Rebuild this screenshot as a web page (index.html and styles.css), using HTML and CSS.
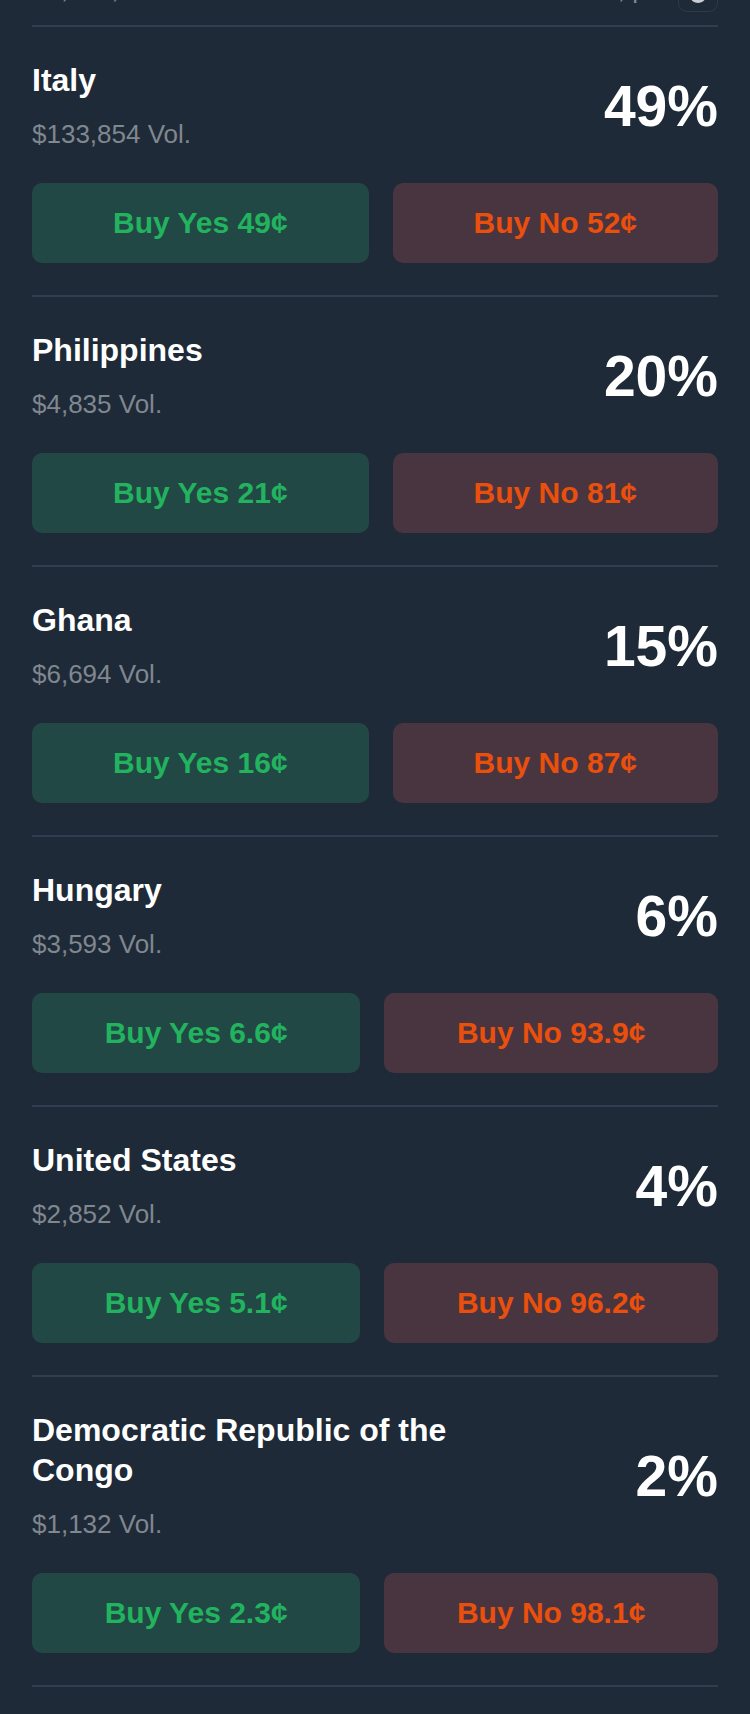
FILE: index.html
```html
<!DOCTYPE html>
<html lang="en">
<head>
  <meta charset="UTF-8">
  <title>Markets</title>
  <link rel="stylesheet" href="styles.css">
</head>
<body>
<div class="list">
  <!-- bottom of the previous row, scrolled mostly out of view -->
  <div class="prev">
    <span class="prev_vol">$2,413,905 Vol.</span>
    <span class="prev_side">
      <span class="prev_note">Rules, p.</span>
      <span class="prev_icon"><span class="prev_dot"></span></span>
    </span>
  </div>

  <div class="market">
    <div class="market_head">
      <div class="market_info">
        <p class="market_title">Italy</p>
        <p class="market_vol">$133,854 Vol.</p>
      </div>
      <div class="market_pct">49%</div>
    </div>
    <div class="market_btns">
      <a class="btn btn_yes" href="#">Buy Yes 49¢</a>
      <a class="btn btn_no" href="#">Buy No 52¢</a>
    </div>
  </div>

  <div class="market">
    <div class="market_head">
      <div class="market_info">
        <p class="market_title">Philippines</p>
        <p class="market_vol">$4,835 Vol.</p>
      </div>
      <div class="market_pct">20%</div>
    </div>
    <div class="market_btns">
      <a class="btn btn_yes" href="#">Buy Yes 21¢</a>
      <a class="btn btn_no" href="#">Buy No 81¢</a>
    </div>
  </div>

  <div class="market">
    <div class="market_head">
      <div class="market_info">
        <p class="market_title">Ghana</p>
        <p class="market_vol">$6,694 Vol.</p>
      </div>
      <div class="market_pct">15%</div>
    </div>
    <div class="market_btns">
      <a class="btn btn_yes" href="#">Buy Yes 16¢</a>
      <a class="btn btn_no" href="#">Buy No 87¢</a>
    </div>
  </div>

  <div class="market">
    <div class="market_head">
      <div class="market_info">
        <p class="market_title">Hungary</p>
        <p class="market_vol">$3,593 Vol.</p>
      </div>
      <div class="market_pct">6%</div>
    </div>
    <div class="market_btns">
      <a class="btn btn_yes" href="#">Buy Yes 6.6¢</a>
      <a class="btn btn_no" href="#">Buy No 93.9¢</a>
    </div>
  </div>

  <div class="market">
    <div class="market_head">
      <div class="market_info">
        <p class="market_title">United States</p>
        <p class="market_vol">$2,852 Vol.</p>
      </div>
      <div class="market_pct">4%</div>
    </div>
    <div class="market_btns">
      <a class="btn btn_yes" href="#">Buy Yes 5.1¢</a>
      <a class="btn btn_no" href="#">Buy No 96.2¢</a>
    </div>
  </div>

  <div class="market">
    <div class="market_head">
      <div class="market_info">
        <p class="market_title">Democratic Republic of the Congo</p>
        <p class="market_vol">$1,132 Vol.</p>
      </div>
      <div class="market_pct">2%</div>
    </div>
    <div class="market_btns">
      <a class="btn btn_yes" href="#">Buy Yes 2.3¢</a>
      <a class="btn btn_no" href="#">Buy No 98.1¢</a>
    </div>
  </div>

  <div class="list_end"></div>
</div>
</body>
</html>
```

FILE: styles.css
```css
*{
  margin: 0;
  padding: 0;
  box-sizing: border-box;
}
body{
  background: #1e2a38;
  font-family: "Liberation Sans", Arial, sans-serif;
  color: #ffffff;
}
.list{
  padding: 0 32px;
}
/* leftover of the row above */
.prev{
  height: 25px;
  overflow: hidden;
  display: flex;
  justify-content: space-between;
  align-items: flex-start;
}
.prev_vol{
  margin-top: -26px;
  font-size: 26px;
  line-height: 30px;
  color: #80878f;
}
.prev_side{
  display: flex;
  align-items: flex-start;
  gap: 24px;
}
.prev_note{
  margin-top: -26px;
  font-size: 26px;
  line-height: 30px;
  color: #80878f;
}
.prev_icon{
  display: block;
  width: 40px;
  height: 40px;
  margin-top: -28px;
  border: 1px solid #2e3a48;
  border-radius: 9px;
  position: relative;
}
.prev_dot{
  position: absolute;
  left: 12px;
  top: 20px;
  width: 14px;
  height: 10px;
  border-radius: 50%;
  background: #c9cdd2;
}
.market{
  border-top: 2px solid #2f3e50;
  padding: 33px 0 32px;
}
.market_head{
  display: flex;
  justify-content: space-between;
  align-items: center;
}
.market_info{
  max-width: 460px;
}
.market_title{
  font-size: 32px;
  line-height: 40px;
  font-weight: bold;
  color: #ffffff;
}
.market_vol{
  margin-top: 16px;
  font-size: 26px;
  line-height: 36px;
  color: #80878f;
}
.market_pct{
  font-size: 57px;
  line-height: 1;
  font-weight: bold;
  color: #ffffff;
}
.market_btns{
  display: flex;
  gap: 24px;
  margin-top: 31px;
}
.btn{
  flex: 1 1 auto;
  height: 80px;
  border-radius: 10px;
  display: flex;
  align-items: center;
  justify-content: center;
  font-size: 30px;
  font-weight: bold;
  text-decoration: none;
}
.btn_yes{
  background: #224845;
  color: #22b35f;
}
.btn_no{
  background: #483540;
  color: #ea4f0c;
}
.list_end{
  border-top: 2px solid #2f3e50;
  height: 29px;
}
```
